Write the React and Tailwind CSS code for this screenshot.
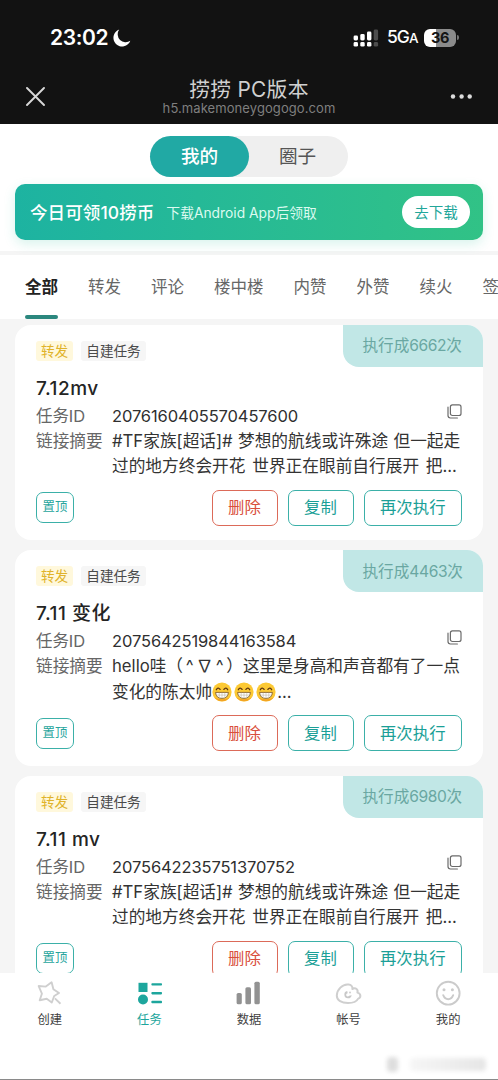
import { useState } from 'react';

const tabs = ['全部', '转发', '评论', '楼中楼', '内赞', '外赞', '续火', '签到'];

const tasks = [
  {
    title: '7.12mv',
    id: '2076160405570457600',
    count: 6662,
    lines: ['#TF家族[超话]# 梦想的航线或许殊途 但一起走', '过的地方终会开花 世界正在眼前自行展开 把...'],
  },
  {
    title: '7.11 变化',
    id: '2075642519844163584',
    count: 4463,
    lines: ['hello哇（ ^ ∇ ^ ）这里是身高和声音都有了一点', '变化的陈太帅'],
    grins: 3,
  },
  {
    title: '7.11 mv',
    id: '2075642235751370752',
    count: 6980,
    lines: ['#TF家族[超话]# 梦想的航线或许殊途 但一起走', '过的地方终会开花 世界正在眼前自行展开 把...'],
  },
];

function StatusBar() {
  return (
    <div className="flex h-[71px] items-center justify-between pt-[4px] pr-[39px] pl-[50px] text-white">
      <div className="flex items-center gap-[5px]">
        <span className="text-[21px] leading-6 font-semibold tracking-[-0.4px]">23:02</span>
        <svg width="18" height="18" viewBox="0 0 18 18" fill="currentColor">
          <path d="M6.2.6A8.7 8.7 0 1 0 17.3 11.8 8 8 0 0 1 6.2.6Z" />
        </svg>
      </div>
      <div className="flex items-center">
        <svg width="26" height="18" viewBox="0 0 26 18" fill="currentColor">
          <rect x="0.6" y="6.5" width="4.4" height="5" rx="1.4" />
          <rect x="7.3" y="5" width="4.4" height="6.5" rx="1.4" />
          <rect x="14" y="2.5" width="4.4" height="9" rx="1.4" />
          <rect x="20.7" y="0.5" width="4.4" height="11" rx="1.4" opacity="0.25" />
          <rect x="0.6" y="13" width="4.4" height="4.6" rx="1.4" />
          <rect x="7.3" y="13" width="4.4" height="4.6" rx="1.4" />
          <rect x="14" y="13" width="4.4" height="4.6" rx="1.4" />
          <rect x="20.7" y="13" width="4.4" height="4.6" rx="1.4" opacity="0.25" />
        </svg>
        <span className="ml-[8px] w-[37px] text-[17.5px] leading-6 font-medium tracking-[-1px]">
          5G<span className="text-[13.5px]">A</span>
        </span>
        <div className="flex h-[18px] w-[32px] items-center justify-center rounded-[6px] bg-linear-to-r from-white from-38% to-[#8b8b8b] to-38% text-[14.5px] leading-[18px] font-bold tracking-[-0.3px] text-[#151515]">
          36
        </div>
        <div className="ml-px h-[5px] w-[2px] rounded-r-full bg-[#777]" />
      </div>
    </div>
  );
}

function TitleBar() {
  return (
    <div className="flex h-[50px] items-center justify-between px-[26px]">
      <svg width="19" height="19" viewBox="0 0 19 19" fill="none" stroke="#d8d8d8" strokeWidth="1.9" strokeLinecap="round">
        <path d="M1 1l17 17M18 1L1 18" />
      </svg>
      <div className="flex flex-col items-center pt-[2px] pl-[4px]">
        <div className="text-[20.8px] leading-[22px] tracking-[0.3px] text-[#d0d0d0]">捞捞 PC版本</div>
        <div className="text-[13px] leading-[15px] tracking-[0.08px] text-[#7f7f7f]">h5.makemoneygogogo.com</div>
      </div>
      <svg width="23" height="5" viewBox="0 0 23 5" fill="#dcdcdc">
        <circle cx="4" cy="2.5" r="2.2" />
        <circle cx="12.6" cy="2.5" r="2.2" />
        <circle cx="20.7" cy="2.5" r="2.2" />
      </svg>
    </div>
  );
}

function Grin() {
  return (
    <svg className="mr-[1.7px] inline-block align-[-4px]" width="20" height="20" viewBox="0 0 20 20">
      <circle cx="10" cy="10" r="9.6" fill="#fcc934" />
      <path d="M2 15a9.6 9.6 0 0 0 16 0c-4 3-12 3-16 0Z" fill="#f3a424" />
      <path d="M4.3 7.8q1.7-3.2 3.8-.4M11.9 7.4q2.1-2.8 3.8.4" fill="none" stroke="#5c3410" strokeWidth="1.3" strokeLinecap="round" />
      <path d="M3.6 10.4h12.8q-.4 6-6.4 6t-6.4-6Z" fill="#fff" stroke="#76501f" strokeWidth="0.8" />
      <path d="M4 13.1h12M7.2 10.6v5M10 10.6v5.6M12.8 10.6v5" stroke="#b5a992" strokeWidth="0.5" />
    </svg>
  );
}

function TaskCard({ task }) {
  return (
    <div className="relative h-[215.6px] shrink-0 overflow-hidden rounded-[16px] bg-white px-[21px] pt-[16px]">
      <div className="absolute top-0 right-0 flex h-[42px] w-[140.5px] items-center rounded-bl-[16px] bg-[#c1e7e6] pl-[20px] text-[15.6px] whitespace-nowrap text-[#6aa7a2]">
        执行成<span className="tracking-[-0.4px]">{task.count}</span>次
      </div>
      <div className="flex gap-[8px] text-[13.6px] leading-[20px]">
        <span className="flex h-[20px] w-[37px] items-center justify-center rounded-[3px] bg-[#fff8dc] text-[#e0b32a]">转发</span>
        <span className="flex h-[20px] w-[65px] items-center justify-center rounded-[3px] bg-[#f6f6f6] text-[#4a4a4a]">自建任务</span>
      </div>
      <div className="mt-[15px] text-[19px] leading-[26px] font-medium tracking-[0.5px] text-[#242424]">{task.title}</div>
      <div className="mt-[1px] flex h-[26px] items-center text-[16.5px] leading-[26px]">
        <span className="w-[76px] tracking-[-0.1px] text-[#666]">任务ID</span>
        <span className="tracking-[-0.12px] text-[#2f2f2f]">{task.id}</span>
        <svg className="mb-[8px] ml-auto" width="15" height="15" viewBox="0 0 15 15" fill="none" stroke="#6b6b6b" strokeWidth="1.2">
          <rect x="3.4" y="0.9" width="10.6" height="10.6" rx="2" />
          <path d="M1 3.2v8.4Q1 14 3.4 14h7" strokeLinecap="round" />
        </svg>
      </div>
      <div className="flex text-[16.7px] leading-[25.4px] whitespace-nowrap">
        <span className="w-[76px] shrink-0 text-[#666]">链接摘要</span>
        <div className="text-[#333]">
          <div className={task.grins ? '[word-spacing:-2px]' : '[word-spacing:0.6px]'}>{task.lines[0]}</div>
          <div className="[word-spacing:2px]">
            {task.lines[1]}
            {task.grins && (
              <>
                {Array.from({ length: task.grins }, (_, i) => <Grin key={i} />)}
                ...
              </>
            )}
          </div>
        </div>
      </div>
      <div className="mt-[10px] flex h-[36px] items-center text-[16.4px]">
        <button className="h-[31px] w-[38px] rounded-[7px] border-[1.5px] border-[#3bb0a8] text-[12.4px] text-[#27a59d]">置顶</button>
        <button className="ml-auto h-[36px] w-[66px] rounded-[7px] border-[1.5px] border-[#dc6a59] text-[#d94f3c]">删除</button>
        <button className="ml-[10px] h-[36px] w-[66px] rounded-[7px] border-[1.5px] border-[#3bb0a8] text-[#1b9f97]">复制</button>
        <button className="ml-[10px] h-[36px] w-[98.5px] rounded-[7px] border-[1.5px] border-[#3bb0a8] text-[#1b9f97]">再次执行</button>
      </div>
    </div>
  );
}

const navItems = [
  {
    label: '创建',
    icon: (
      <g fill="none" stroke="#cfcfcf" strokeWidth="1.9" strokeLinejoin="round">
        <path d="M15.6 2.2l1.8 7 5.6 3.8-4.8 3-2.4 6.5-5.1-3.7-7 1.4 2.2-6.5L2.6 6l7.2.6Z" />
        <path d="M18.9 18.4l5.6 5.4" />
      </g>
    ),
  },
  {
    label: '任务',
    active: true,
    icon: (
      <g fill="#1da69d">
        <rect x="2.5" y="2.8" width="9" height="9.2" />
        <circle cx="7" cy="19.5" r="5" />
        <rect x="15.4" y="3.2" width="10.6" height="2.4" rx="0.8" />
        <rect x="15.4" y="12" width="10.6" height="2.4" rx="0.8" />
        <rect x="15.4" y="20.8" width="10.6" height="2.4" rx="0.8" />
      </g>
    ),
  },
  {
    label: '数据',
    icon: (
      <g fill="#929292">
        <rect x="1.6" y="13" width="5.2" height="11.3" rx="1.6" />
        <rect x="10.4" y="7.2" width="5.6" height="17.1" rx="1.6" />
        <rect x="19.4" y="1.7" width="5.4" height="22.6" rx="1.6" />
      </g>
    ),
  },
  {
    label: '帐号',
    icon: (
      <g>
        <path
          d="M13.6 4.5C7.4 3.6 1.8 10 1.8 15.6c0 4.9 5 7.4 11.2 7.4 5.4 0 8.8-1.8 10.2-4.4 3-.9 3-5-.8-6 1-3-1.6-5.4-5-3.6.4-2.7-1.4-4.2-3.8-4.5Z"
          fill="none"
          stroke="#cfcfcf"
          strokeWidth="2"
          strokeLinejoin="round"
        />
        <path d="M12.2 11a3.7 3.7 0 1 0 4.5 4.2l-2.6.6a1.6 1.6 0 1 1-1.4-2.5Z" fill="#c8c8c8" />
        <circle cx="15" cy="12.6" r="1" fill="#cfcfcf" />
      </g>
    ),
  },
  {
    label: '我的',
    icon: (
      <g fill="none" stroke="#cbcbcb" strokeWidth="1.9">
        <circle cx="13.2" cy="13.2" r="11.4" />
        <path d="M8.2 15.2q1.6 4 5 4t5-4" strokeLinecap="round" />
        <circle cx="9" cy="9.8" r="1.5" fill="#cbcbcb" stroke="none" />
        <circle cx="17.4" cy="9.8" r="1.5" fill="#cbcbcb" stroke="none" />
      </g>
    ),
  },
];

function BottomNav() {
  return (
    <nav className="flex h-[107px] shrink-0 flex-col justify-between border-b border-[#8a8a8a] bg-white">
      <div className="flex pt-[7px]">
        {navItems.map(item => (
          <div key={item.label} className="flex flex-1 flex-col items-center">
            <svg width="27" height="27" viewBox="0 0 27 27">{item.icon}</svg>
            <span className={`mt-[4px] text-[12.3px] leading-[18px] ${item.active ? 'text-[#1da69d]' : 'text-[#3f3f3f]'}`}>{item.label}</span>
          </div>
        ))}
      </div>
      {/* faded badge in the corner */}
      <div className="mr-[12px] mb-[7px] flex items-center gap-[12px] self-end blur-[2px]">
        <div className="h-[15px] w-[11px] rounded-[4px] bg-[#dedede]" />
        <div className="h-[13px] w-[76px] rounded-[4px] bg-linear-to-r from-[#f6f6f6] to-[#e6e6e6]" />
      </div>
    </nav>
  );
}

export default function App() {
  const [current, setCurrent] = useState('全部');

  return (
    <div className="flex h-[1080px] w-[498px] flex-col overflow-hidden bg-[#f5f5f5] font-[Inter,'Noto_Sans_CJK_SC',sans-serif]">
      <header className="h-[124px] shrink-0 bg-[#121212]">
        <StatusBar />
        <TitleBar />
      </header>

      <section className="h-[127px] shrink-0 bg-white px-[15px] pt-[12px]">
        <div className="mx-auto flex h-[41px] w-[198px] rounded-full bg-[#efefef] text-[18.6px]">
          <div className="flex w-[99px] items-center justify-center rounded-full bg-[#21a9a4] font-medium text-white">我的</div>
          <div className="flex w-[99px] items-center justify-center pr-[2px] text-[#555]">圈子</div>
        </div>
        <div className="mt-[7px] flex h-[56px] items-center rounded-[10px] bg-linear-to-r from-[#1db3a1] to-[#31c286] pr-[13px] pl-[15px] whitespace-nowrap text-white shadow-[0_4px_12px_rgba(40,190,150,0.18)]">
          <span className="pt-[2px] text-[17.5px] font-medium tracking-[0.1px]">今日可领10捞币</span>
          <span className="ml-[12px] pt-[2px] text-[13.8px] text-[#dcfaf0]">下载Android App后领取</span>
          <button className="ml-auto h-[32px] w-[68px] rounded-full bg-white pt-px text-[14.5px] text-[#22a69a]">去下载</button>
        </div>
      </section>

      <div className="mt-[4px] flex h-[64px] shrink-0 gap-[30px] overflow-hidden bg-white pl-[25px] text-[16.5px] whitespace-nowrap">
        {tabs.map(tab => (
          <button
            key={tab}
            onClick={() => setCurrent(tab)}
            className={`flex h-full shrink-0 flex-col justify-between pt-[20px] leading-[25px] ${tab === current ? 'font-bold text-[#222]' : 'text-[#666]'}`}
          >
            {tab}
            {tab === current && <span className="h-[4px] w-full rounded-full bg-[#2b877e]" />}
          </button>
        ))}
      </div>

      <main className="flex min-h-0 flex-1 flex-col gap-[10px] overflow-hidden px-[15px] pt-[5.7px]">
        {tasks.map(task => <TaskCard key={task.id} task={task} />)}
      </main>

      <BottomNav />
    </div>
  );
}
